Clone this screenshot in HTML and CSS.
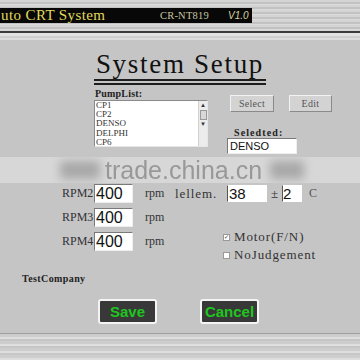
FILE: index.html
```html
<!DOCTYPE html>
<html lang="en">
<head>
    <meta charset="UTF-8">
    <meta name="viewport" content="width=device-width, initial-scale=1.0">
    <title>System Setup</title>
    <link rel="stylesheet" href="styles.css">
</head>
<body>
    <div class="screen">
        <header class="topbar">
            <div class="caption">
                <span class="app-name">uto CRT System</span>
                <span class="model">CR-NT819</span>
                <span class="version">V1.0</span>
            </div>
        </header>
        <div class="topline"></div>

        <main class="panel">
            <h1 class="title">System Setup</h1>

            <section class="pump">
                <div class="pump-list">
                    <div class="label">PumpList:</div>
                    <div class="listbox">
                        <ul class="items">
                            <li>CP1</li>
                            <li>CP2</li>
                            <li>DENSO</li>
                            <li>DELPHI</li>
                            <li>CP6</li>
                        </ul>
                        <div class="scrollbar">
                            <span class="arrow">&#9652;</span>
                            <span class="thumb"></span>
                            <span class="arrow">&#9662;</span>
                        </div>
                    </div>
                </div>
                <div class="pump-side">
                    <div class="side-buttons">
                        <button class="btn btn-select">Select</button>
                        <button class="btn btn-edit">Edit</button>
                    </div>
                    <div class="label selected-label">Seledted:</div>
                    <div class="field selected">DENSO</div>
                </div>
            </section>

            <div class="watermark">
                <span class="smudge smudge-left"></span>
                <span class="mark-text">trade.china.cn</span>
                <span class="smudge smudge-right"></span>
            </div>

            <div class="rpm-row first">
                <span class="rpm-label">RPM2</span>
                <span class="field rpm">400</span>
                <span class="unit">rpm</span>
                <span class="temp-label">lellem.</span>
                <span class="field temp">38</span>
                <span class="pm">&plusmn;</span>
                <span class="field tol">2</span>
                <span class="deg">C</span>
            </div>

            <div class="lower">
                <div class="rpm-col">
                    <div class="rpm-row">
                        <span class="rpm-label">RPM3</span>
                        <span class="field rpm">400</span>
                        <span class="unit">rpm</span>
                    </div>
                    <div class="rpm-row">
                        <span class="rpm-label">RPM4</span>
                        <span class="field rpm">400</span>
                        <span class="unit">rpm</span>
                    </div>
                </div>
                <div class="checks">
                    <div class="check"><span class="box checked">&#10003;</span>Motor(F/N)</div>
                    <div class="check"><span class="box"></span>NoJudgement</div>
                </div>
            </div>

            <div class="company">TestCompany</div>

            <div class="actions">
                <button class="action">Save</button>
                <button class="action">Cancel</button>
            </div>
        </main>

        <footer class="bottombar"></footer>
    </div>
</body>
</html>
```

FILE: styles.css
```css
:root {
    --panel-bg: #c5c5c5;
    --text-dark: #2a2a2a;
    --serif: 'Liberation Serif', 'DejaVu Serif', serif;
    --sans: 'Liberation Sans', Arial, sans-serif;
}

* {
    box-sizing: border-box;
    margin: 0;
    padding: 0;
}

body {
    background: var(--panel-bg);
    font-family: var(--serif);
    color: var(--text-dark);
}

.screen {
    width: 360px;
    height: 360px;
    overflow: hidden;
    display: flex;
    flex-direction: column;
}

/* Top caption strip */
.topbar {
    height: 31px;
    padding-top: 8px;
    background: repeating-linear-gradient(180deg, #d4d4d4 0, #d4d4d4 2px, #c2c2c2 2px, #c2c2c2 4px, #dadada 4px, #dadada 5px);
}

.caption {
    width: 252px;
    height: 15px;
    background: #080808;
    display: flex;
    align-items: center;
    line-height: 15px;
    white-space: nowrap;
}

.app-name {
    width: 160px;
    padding-left: 1px;
    font-size: 15px;
    letter-spacing: 0.4px;
    color: #e2d95c;
}

.model {
    width: 68px;
    font-size: 10.5px;
    letter-spacing: 0.2px;
    color: #c9c6a0;
}

.version {
    font-family: var(--sans);
    font-style: italic;
    font-size: 10px;
    color: #d6d2a0;
}

.topline {
    height: 9px;
    border-top: 2px solid #3c3c3c;
    background: linear-gradient(180deg, #e2e2e2 0, #e2e2e2 3px, #cfcfcf 3px, #cfcfcf 5px, #dcdcdc 5px);
}

/* Main panel */
.panel {
    height: 293px;
    background: var(--panel-bg);
}

.title {
    width: 172px;
    margin-left: 94px;
    padding-top: 8px;
    height: 45px;
    font-size: 27px;
    font-weight: normal;
    line-height: 32px;
    letter-spacing: 1.7px;
    text-align: center;
    white-space: nowrap;
    color: #111;
    border-bottom: 6px double #1e1e1e;
}

.label {
    font-size: 10px;
    font-weight: bold;
    color: #222;
}

.pump {
    display: flex;
    height: 72px;
}

.pump-list {
    margin-left: 94px;
    padding-top: 3px;
}

.pump-list .label {
    padding-left: 1px;
    height: 12px;
    line-height: 12px;
    letter-spacing: 0.2px;
}

.listbox {
    width: 114px;
    height: 47px;
    display: flex;
    background: #fff;
    border: 1px solid #8a8a8a;
    border-right-color: #e6e6e6;
    border-bottom-color: #e6e6e6;
}

.items {
    flex: 1;
    list-style: none;
    padding: 0 0 0 1px;
    font-size: 9px;
    line-height: 9.2px;
    color: #333;
}

.scrollbar {
    width: 9px;
    display: flex;
    flex-direction: column;
    align-items: center;
    background: #ececec;
    border-left: 1px solid #d0d0d0;
}

.arrow {
    height: 9px;
    font-size: 7px;
    line-height: 9px;
    color: #333;
}

.thumb {
    width: 7px;
    height: 10px;
    background: #d8d8d8;
    border: 1px solid #999;
    flex: none;
}

.pump-side {
    margin-left: 22px;
    padding-top: 10px;
}

.side-buttons {
    display: flex;
    gap: 15px;
}

.btn {
    height: 17px;
    font-family: var(--serif);
    font-size: 10px;
    letter-spacing: 0.3px;
    color: #555;
    background: #d3d3d3;
    border: 1px solid;
    border-color: #f2f2f2 #8a8a8a #8a8a8a #f2f2f2;
}

.btn-select {
    width: 44px;
}

.btn-edit {
    width: 43px;
}

.selected-label {
    margin: 15px 0 0 4px;
    height: 11px;
    letter-spacing: 1.1px;
}

.field {
    background: #fff;
    border: 1px solid #7a7a7a;
    border-right-color: #eeeeee;
    border-bottom-color: #eeeeee;
    font-family: var(--sans);
    color: #111;
}

.selected {
    width: 70px;
    height: 16px;
    margin-left: -3px;
    padding-left: 2px;
    font-size: 11px;
    line-height: 15px;
}

/* Watermark band from the source picture */
.watermark {
    height: 26px;
    background: #d7d7d7;
    display: flex;
    align-items: center;
    overflow: hidden;
}

.mark-text {
    margin-left: 5px;
    font-family: var(--sans);
    font-size: 25px;
    line-height: 25px;
    color: #8e8e8e;
    opacity: 0.85;
}

.smudge {
    height: 18px;
    background: #8a8a8a;
    filter: blur(5px);
    opacity: 0.6;
}

.smudge-left {
    width: 40px;
    margin-left: 60px;
}

.smudge-right {
    width: 34px;
    margin-left: 8px;
}

/* RPM rows */
.rpm-row {
    display: flex;
    align-items: center;
    height: 19px;
    margin-left: 62px;
    margin-bottom: 5px;
    font-size: 12px;
    color: #333;
}

.rpm-row.first {
    margin-top: 1px;
}

.rpm-label {
    width: 32px;
}

.rpm {
    width: 39px;
    height: 19px;
    font-size: 16px;
    line-height: 18px;
    padding-left: 1px;
}

.unit {
    width: 30px;
    margin-left: 12px;
}

.temp-label {
    width: 52px;
    font-size: 13px;
    letter-spacing: 0.9px;
}

.temp {
    width: 40px;
    height: 17px;
    font-size: 15px;
    line-height: 16px;
    padding-left: 1px;
    border-color: #fff;
    border-left-color: #555;
}

.pm {
    width: 15px;
    text-align: center;
    font-size: 13px;
}

.tol {
    width: 20px;
    height: 17px;
    font-size: 15px;
    line-height: 16px;
    border-color: #fff;
    border-left-color: #555;
}

.deg {
    margin-left: 7px;
    font-size: 12px;
    color: #555;
}

.lower {
    display: flex;
}

.rpm-col {
    width: 223px;
}

.checks {
    margin-top: 20px;
}

.check {
    display: flex;
    align-items: center;
    height: 18px;
    font-size: 13px;
    letter-spacing: 0.9px;
    color: #333;
}

.box {
    width: 7px;
    height: 7px;
    margin-right: 4px;
    background: #fff;
    border: 1px solid #999;
    font-size: 6px;
    line-height: 5px;
    letter-spacing: 0;
    text-align: center;
    color: #333;
}

.company {
    margin: 10px 0 0 22px;
    height: 10px;
    font-size: 10px;
    font-weight: bold;
    line-height: 10px;
    letter-spacing: 0.4px;
    color: #222;
}

.actions {
    display: flex;
    gap: 43px;
    margin: 15px 0 0 98px;
}

.action {
    width: 59px;
    height: 25px;
    background: #383838;
    border: 2px solid #f4f4f4;
    border-radius: 3px;
    font-family: var(--sans);
    font-size: 15px;
    font-weight: bold;
    color: #1fc51f;
}

/* Bottom strip */
.bottombar {
    flex: 1;
    border-top: 1px solid #9e9e9e;
    background: repeating-linear-gradient(180deg, #cdcdcd 0, #cdcdcd 3px, #dedede 3px, #dedede 5px, #c6c6c6 5px, #c6c6c6 7px);
}
```
